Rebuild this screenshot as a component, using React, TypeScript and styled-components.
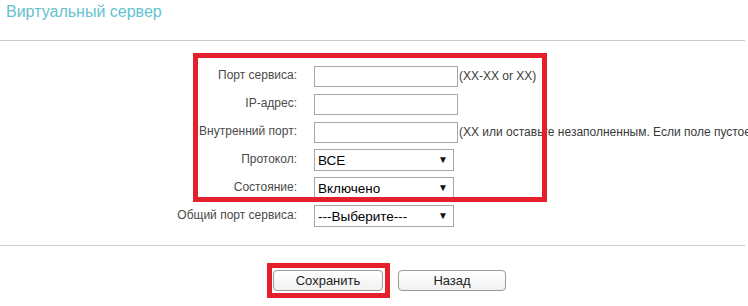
import React from 'react';
import styled, { createGlobalStyle } from 'styled-components';

const GlobalStyle = createGlobalStyle`
  body {
    margin: 0;
    background: #ffffff;
    font-family: 'Liberation Sans', Arial, sans-serif;
    overflow: hidden;
  }
`;

const Page = styled.div`
  width: 748px;
  height: 306px;
  overflow: hidden;
`;

const Header = styled.header`
  width: 745px;
  height: 40px;
  border-bottom: 1px solid #cccccc;
  box-sizing: content-box;
`;

const Title = styled.h1`
  margin: 0;
  padding: 3px 0 0 6px;
  font-size: 16px;
  line-height: 18px;
  font-weight: normal;
  color: #64c2ce;
`;

const Form = styled.div`
  padding-top: 21px;
  padding-bottom: 15px;
`;

// red annotation frame drawn over the first five rows
const Highlighted = styled.div`
  position: relative;

  &::after {
    content: '';
    position: absolute;
    left: 193px;
    top: -9px;
    width: 354px;
    height: 149px;
    border: 5px solid #e3202c;
    box-sizing: border-box;
    pointer-events: none;
  }
`;

const Row = styled.div`
  display: flex;
  align-items: center;
  height: 28px;
  white-space: nowrap;
`;

const Label = styled.label`
  width: 297px;
  margin-right: 17px;
  padding-bottom: 2px;
  text-align: right;
  font-size: 12px;
  color: #4a4a4a;
  flex-shrink: 0;
`;

const TextInput = styled.input`
  width: 144px;
  height: 21px;
  box-sizing: border-box;
  margin: 0;
  border: 1px solid #a8a8a8;
  background: #ffffff;
  font-family: inherit;
  font-size: 13px;
  padding: 0 3px;
  flex-shrink: 0;
`;

const Hint = styled.span`
  margin-left: 1px;
  font-size: 12px;
  color: #3a3a3a;
`;

const SelectBox = styled.div`
  position: relative;
  width: 140px;
  height: 22px;
  flex-shrink: 0;

  &::after {
    content: '▼';
    position: absolute;
    right: 6px;
    top: 5px;
    font-size: 10px;
    line-height: 12px;
    color: #111111;
    pointer-events: none;
  }
`;

const Select = styled.select`
  appearance: none;
  width: 100%;
  height: 100%;
  box-sizing: border-box;
  margin: 0;
  border: 1px solid #a8a8a8;
  border-radius: 0;
  background: #ffffff;
  padding: 0 3px;
  font-family: inherit;
  font-size: 13.5px;
  color: #000000;
`;

const Divider = styled.hr`
  width: 745px;
  margin: 0;
  border: none;
  border-top: 1px solid #cccccc;
`;

const Actions = styled.div`
  display: flex;
  align-items: center;
  gap: 8px;
  padding: 17px 0 0 267px;
`;

const Marked = styled.div`
  display: flex;
  border: 5px solid #e3202c;
  padding: 2px 2px 2px 1px;
`;

const Button = styled.button<{ wide?: boolean }>`
  width: ${p => (p.wide ? 110 : 108)}px;
  height: 21px;
  box-sizing: border-box;
  margin: 0;
  padding: 0;
  border: 1px solid #9a9a9a;
  border-radius: 4px;
  background: linear-gradient(#ffffff, #f1f1f1);
  font-family: inherit;
  font-size: 13px;
  color: #222222;
`;

const Dropdown: React.FC<{ value: string; options: string[] }> = ({ value, options }) => (
  <SelectBox>
    <Select defaultValue={value}>
      {options.map(o => (
        <option key={o}>{o}</option>
      ))}
    </Select>
  </SelectBox>
);

export default function App() {
  return (
    <Page>
      <GlobalStyle />
      <Header>
        <Title>Виртуальный сервер</Title>
      </Header>
      <Form>
        <Highlighted>
          <Row>
            <Label>Порт сервиса:</Label>
            <TextInput />
            <Hint>(XX-XX or XX)</Hint>
          </Row>
          <Row>
            <Label>IP-адрес:</Label>
            <TextInput />
          </Row>
          <Row>
            <Label>Внутренний порт:</Label>
            <TextInput />
            <Hint>(XX или оставьте незаполненным. Если поле пустое, внутренний порт совпадает с портом сервиса)</Hint>
          </Row>
          <Row>
            <Label>Протокол:</Label>
            <Dropdown value="ВСЕ" options={['ВСЕ', 'TCP', 'UDP']} />
          </Row>
          <Row>
            <Label>Состояние:</Label>
            <Dropdown value="Включено" options={['Включено', 'Отключено']} />
          </Row>
        </Highlighted>
        <Row>
          <Label>Общий порт сервиса:</Label>
          <Dropdown value="---Выберите---" options={['---Выберите---', 'DNS', 'FTP', 'HTTP']} />
        </Row>
      </Form>
      <Divider />
      <Actions>
        <Marked>
          <Button wide>Сохранить</Button>
        </Marked>
        <Button>Назад</Button>
      </Actions>
    </Page>
  );
}
